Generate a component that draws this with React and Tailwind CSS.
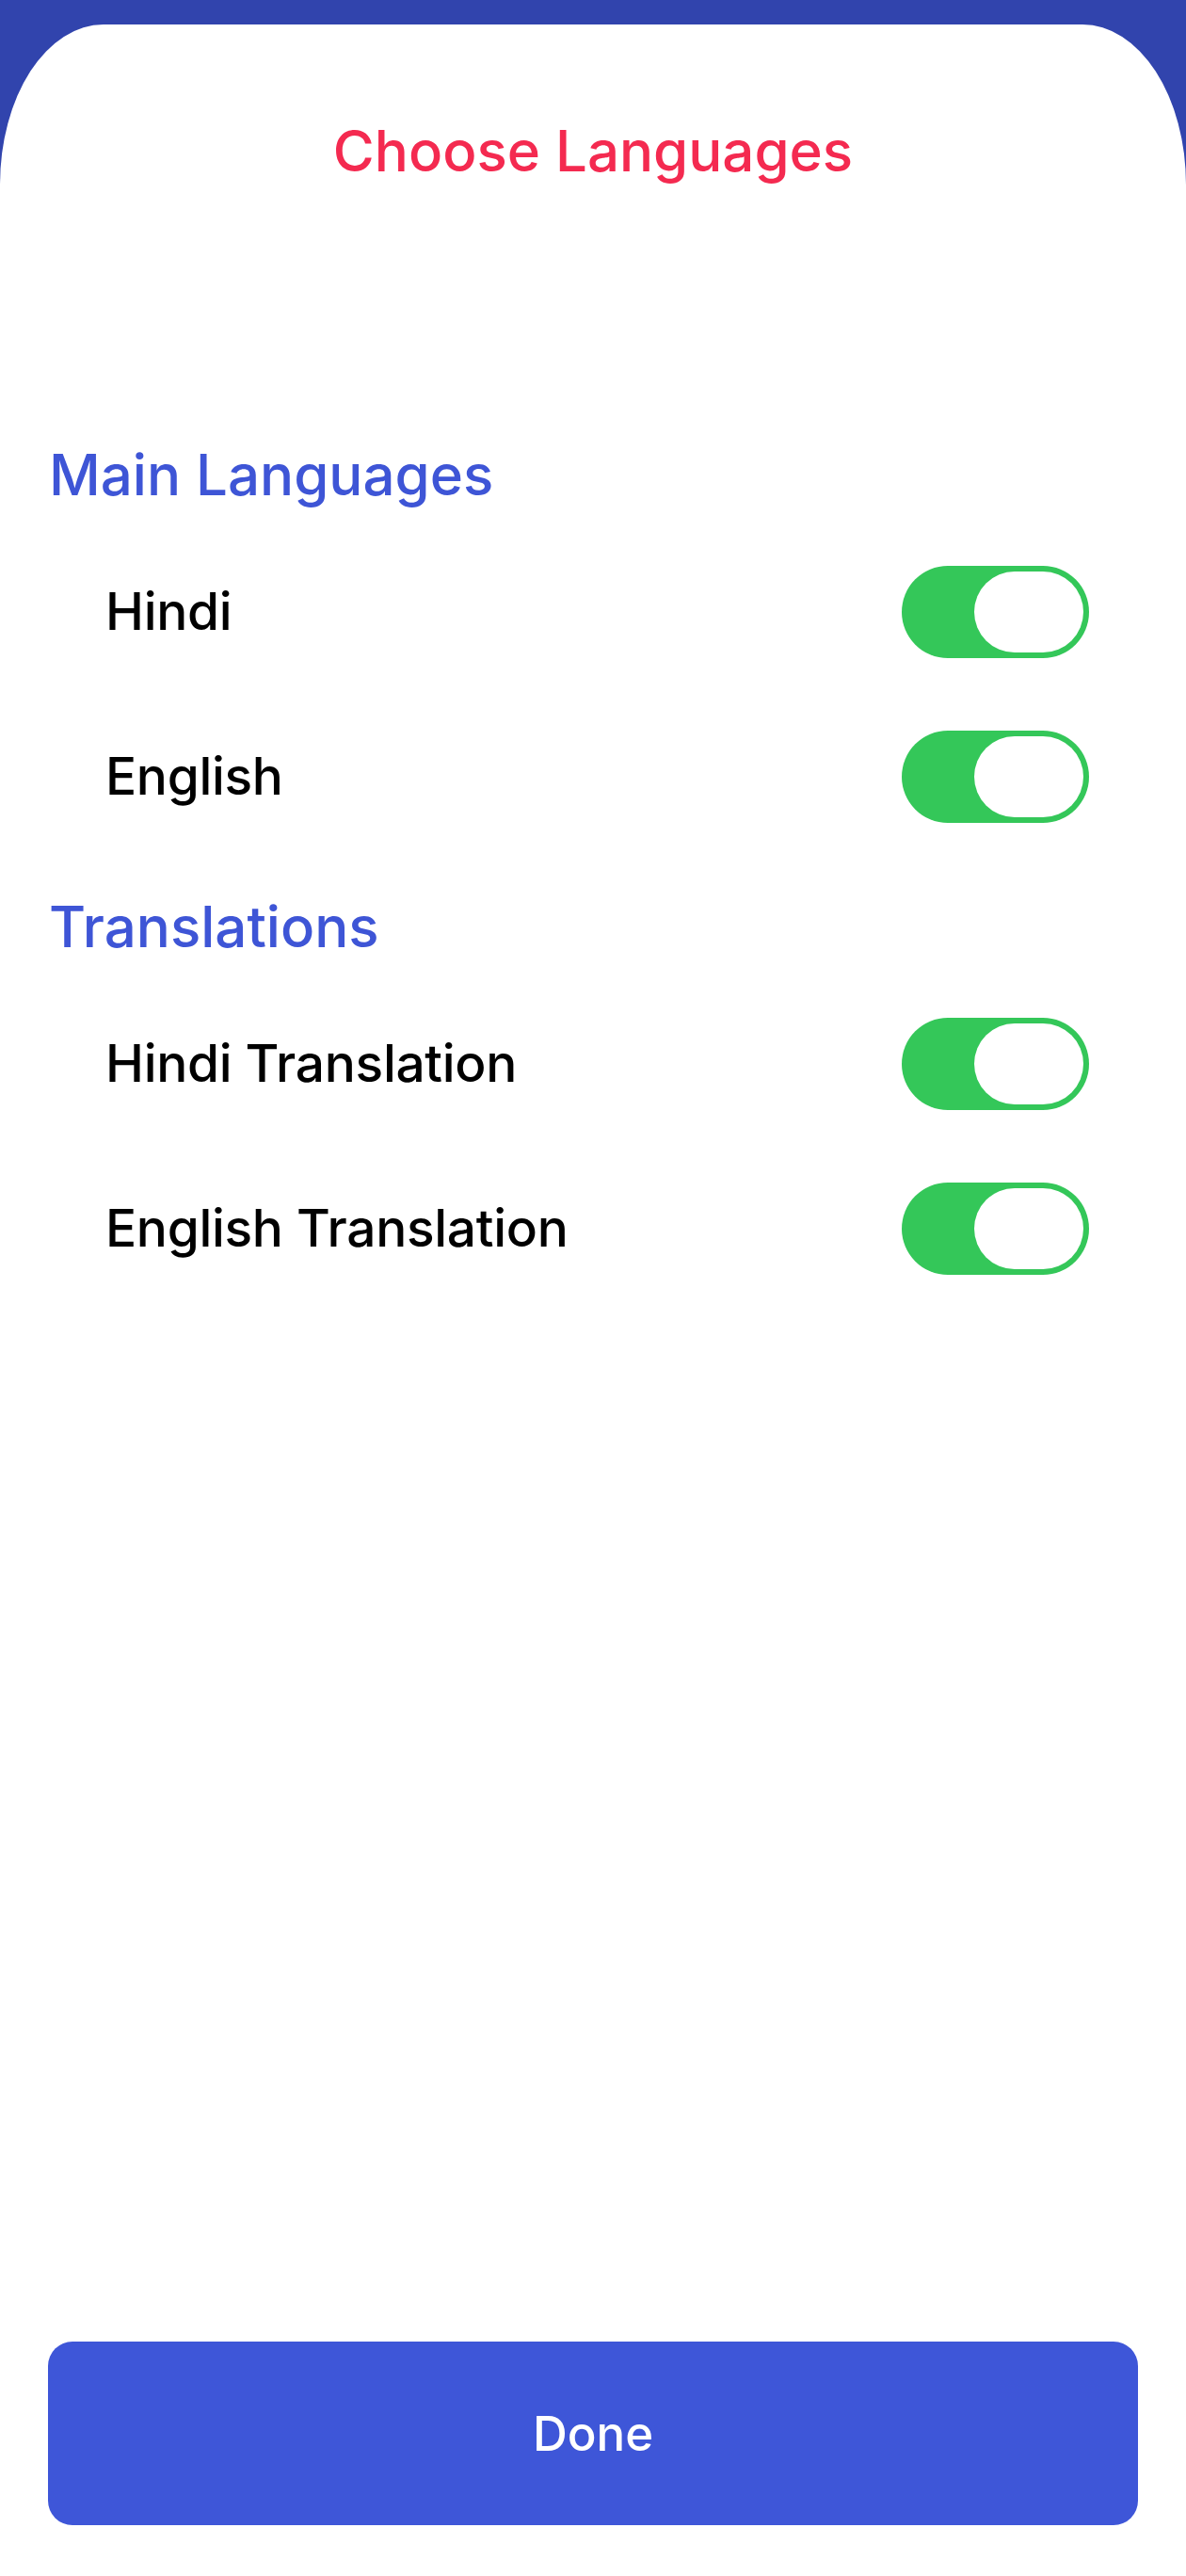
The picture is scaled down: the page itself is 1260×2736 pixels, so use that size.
import React from "react";

function Toggle() {
  return (
    <div className="flex h-[98px] w-[199px] items-center justify-end rounded-full bg-[#34C759] pr-[6px]">
      <div className="h-[86px] w-[116px] rounded-full bg-white" />
    </div>
  );
}

function Row({ label }) {
  return (
    <div className="flex h-[175px] items-center justify-between pl-[112px] pr-[103px]">
      <span className="text-[55px] font-medium leading-none tracking-[-0.3px] text-black">{label}</span>
      <Toggle />
    </div>
  );
}

function Section({ title, items, className }) {
  return (
    <div className={className}>
      <div className="mb-[13px] flex h-[90px] items-center pl-[52px]">
        <span className="text-[60px] font-medium leading-none text-[#3E55D6]">{title}</span>
      </div>
      {items.map((it) => (
        <Row key={it} label={it} />
      ))}
    </div>
  );
}

export default function App() {
  return (
    <div
      className="flex h-[2736px] w-full flex-col bg-[#3144AD]"
      style={{ fontFamily: "Inter, 'Noto Sans', sans-serif" }}
    >
      <div className="mt-[26px] flex flex-1 flex-col rounded-tl-[110px_170px] rounded-tr-[110px_170px] bg-white">
        <div className="flex h-[268px] items-center justify-center">
          <h1 className="text-[60px] font-medium leading-none text-[#F42A50]">Choose Languages</h1>
        </div>
        <Section className="mt-[165px]" title="Main Languages" items={["Hindi", "English"]} />
        <Section className="mt-[27px]" title="Translations" items={["Hindi Translation", "English Translation"]} />
        <div className="flex-1" />
        <button className="mx-[51px] mb-[54px] flex h-[195px] items-center justify-center rounded-[26px] bg-[#3E56D8]">
          <span className="text-[51px] font-medium leading-none text-white">Done</span>
        </button>
      </div>
    </div>
  );
}
